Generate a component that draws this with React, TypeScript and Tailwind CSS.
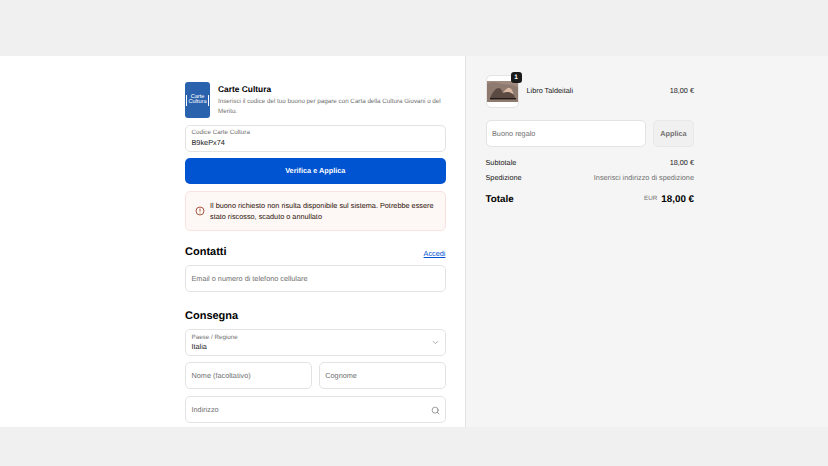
import React from "react";
import { ChevronDown, Search } from "lucide-react";

function Field({ label, className = "", icon }: { label: string; className?: string; icon?: React.ReactNode }) {
  return (
    <div className={`h-[27px] rounded-[5px] border border-[#e3e3e3] bg-white px-[5.5px] pt-[2px] flex items-center justify-between ${className}`}>
      <span className="text-[7.3px] text-[#707070]">{label}</span>
      {icon}
    </div>
  );
}

function Floating({ label, value, icon }: { label: string; value: string; icon?: React.ReactNode }) {
  return (
    <div className="h-[27px] rounded-[5px] border border-[#e3e3e3] bg-white px-[5.5px] flex items-center justify-between">
      <div className="flex flex-col">
        <span className="text-[6.25px] leading-[8.5px] text-[#707070]">{label}</span>
        <span className="text-[7.3px] leading-[9.5px] text-[#1a1a1a]">{value}</span>
      </div>
      {icon}
    </div>
  );
}

export default function App() {
  return (
    <div className="h-[466px] w-[828px] overflow-hidden bg-[#f0f0f0] pt-[56px] pb-[39px] font-['Liberation_Sans',Arial,sans-serif] text-[#1a1a1a] [text-rendering:geometricPrecision]">
      <div className="flex h-[371px] overflow-hidden">
        <div className="w-[466px] shrink-0 border-r border-[#e3e3e3] bg-white pl-[185px] pr-[19.5px] pt-[26px]">
          <div className="flex gap-[8px]">
            <div className="h-[36px] w-[25px] shrink-0 rounded-[3px] bg-[#2a62ad] flex items-center justify-center">
              <div className="border-x border-white px-[1px] text-center text-[5.6px] leading-[5.5px] text-white">
                <div>Carte</div>
                <div>Cultura</div>
              </div>
            </div>
            <div className="pt-[1px]">
              <div className="text-[8.4px] leading-[12px] font-bold text-black">Carte Cultura</div>
              <div className="mt-[2px] text-[6.25px] leading-[9.8px] text-[#707070]">
                Inserisci il codice del tuo buono per pagare con Carta della Cultura Giovani o del Merito.
              </div>
            </div>
          </div>

          <div className="mt-[6.5px]">
            <Floating label="Codice Carte Cultura" value="B9kePx74" />
          </div>

          <div className="mt-[6.5px] h-[26px] rounded-[5px] bg-[#0053d1] pt-[1px] flex items-center justify-center text-[7.3px] font-bold text-white">
            Verifica e Applica
          </div>

          <div className="mt-[7px] h-[40px] rounded-[5px] border border-[#fae3df] bg-[#fdf7f6] flex items-center gap-[5px] pl-[9px] pr-[9px]">
            <svg width="10" height="10" viewBox="0 0 10 10" fill="none" stroke="#a3482f" strokeWidth="0.9" className="shrink-0">
              <circle cx="5" cy="5" r="4" />
              <path d="M5 2.6v3M5 6.8v.7" />
            </svg>
            <div className="text-[7.3px] leading-[11px] text-[#2c1206]">
              Il buono richiesto non risulta disponibile sul sistema. Potrebbe essere stato riscosso, scaduto o annullato
            </div>
          </div>

          <div className="mt-[15px] flex items-end justify-between h-[13px]">
            <h2 className="text-[11px] leading-[13px] font-bold text-black">Contatti</h2>
            <a className="text-[7.3px] leading-[11px] text-[#0053d1] underline">Accedi</a>
          </div>
          <Field label="Email o numero di telefono cellulare" className="mt-[6px]" />

          <h2 className="mt-[17.5px] text-[11px] leading-[13px] font-bold text-black">Consegna</h2>
          <div className="mt-[6.5px]">
            <Floating label="Paese / Regione" value="Italia" icon={<ChevronDown size={9} strokeWidth={1.5} color="#707070" className="mr-[-1px]" />} />
          </div>
          <div className="mt-[6px] flex gap-[7px]">
            <Field label="Nome (facoltativo)" className="flex-1" />
            <Field label="Cognome" className="flex-1" />
          </div>
          <Field label="Indirizzo" className="mt-[7px]" icon={<Search size={9} strokeWidth={1.5} color="#555555" className="mr-[-1px]" />} />
        </div>

        <div className="flex-1 bg-[#f5f5f5] pl-[19.5px] pr-[134px] pt-[19px]">
          <div className="flex items-center justify-between">
            <div className="flex items-center gap-[8px]">
              <div className="relative h-[33px] w-[33px] rounded-[5px] border border-[#e3e3e3] bg-white flex items-center">
                <svg width="31" height="21" viewBox="0 0 31 21" className="block">
                  <rect width="31" height="21" fill="#8f7a70" />
                  <path d="M0 0h31v6C24 3 16 4 12 2 8 1 3 1 0 3z" fill="#a08a80" />
                  <path d="M3 17c3-7 6-10 9-10 3 1 3 4 4 5 2-4 5-6 7-5 2 2 4 6 5 10z" fill="#5b4a42" />
                  <path d="M16 12c2-4 5-6 7-5 2 1 3 4 4 7-3-3-7-4-11-2z" fill="#d9b9a4" />
                  <path d="M3 17h26v1.4H3z" fill="#1f1a18" />
                </svg>
                <span className="absolute -right-[4px] -top-[4px] h-[11px] w-[11px] rounded-[3px] bg-[#1a1a1a] text-white text-[6.5px] leading-[11px] font-bold text-center">1</span>
              </div>
              <span className="text-[7.3px] text-[#1a1a1a]">Libro Taldeitali</span>
            </div>
            <span className="text-[7.3px] text-[#1a1a1a]">18,00 €</span>
          </div>

          <div className="mt-[12px] flex gap-[7px]">
            <Field label="Buono regalo" className="flex-1" />
            <div className="h-[27px] w-[41px] rounded-[5px] border border-[#e8e8e8] bg-[#f0f0f0] pt-[2px] flex items-center justify-center text-[7.3px] font-bold text-[#707070]">
              Applica
            </div>
          </div>

          <div className="mt-[11px] flex justify-between text-[7.3px] leading-[10px]">
            <span>Subtotale</span>
            <span>18,00 €</span>
          </div>
          <div className="mt-[4.5px] flex justify-between text-[7.3px] leading-[10px]">
            <span>Spedizione</span>
            <span className="text-[#707070]">Inserisci indirizzo di spedizione</span>
          </div>
          <div className="mt-[10px] flex items-center justify-between">
            <span className="text-[9.8px] leading-[13px] font-bold text-black">Totale</span>
            <div className="flex items-center gap-[4px]">
              <span className="text-[6.25px] text-[#707070]">EUR</span>
              <span className="text-[9.8px] leading-[13px] font-bold text-black">18,00 €</span>
            </div>
          </div>
        </div>
      </div>
    </div>
  );
}
